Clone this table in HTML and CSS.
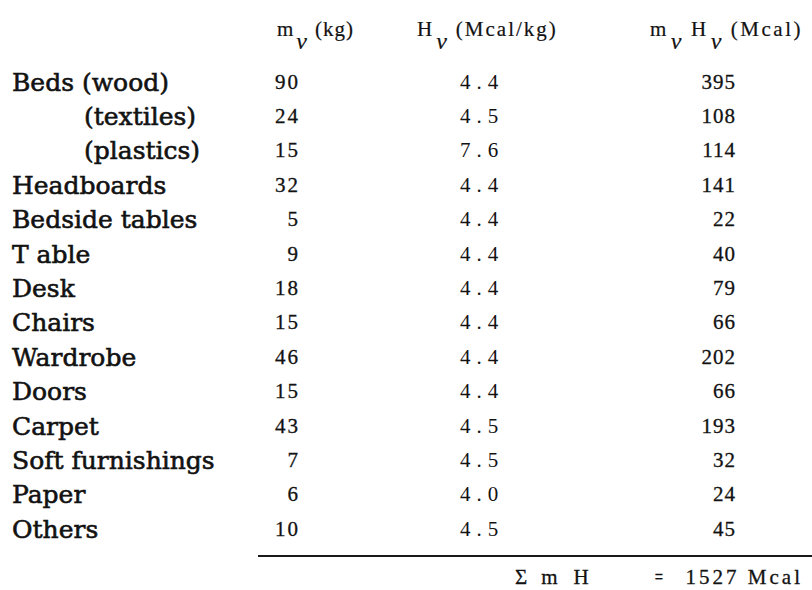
FILE: index.html
```html
<!DOCTYPE html>
<html>
<head>
<meta charset="utf-8">
<link rel="stylesheet" href="styles.css">
</head>
<body>
<div class="sheet">
  <div class="hd hd-label"></div>
  <div class="hd hd-m">m<sub class="nu">ν</sub>(kg)</div>
  <div class="hd hd-h">H<sub class="nu">ν</sub>(Mcal/kg)</div>
  <div class="hd hd-mh">m<sub class="nu">ν</sub>H<sub class="nu">ν</sub>(Mcal)</div>
  <div class="hd"></div>

  <div class="lab">Beds (wood)</div><div class="n">90</div><div class="h">4.4</div><div class="t">395</div><div></div>
  <div class="lab ind">(textiles)</div><div class="n">24</div><div class="h">4.5</div><div class="t">108</div><div></div>
  <div class="lab ind">(plastics)</div><div class="n">15</div><div class="h">7.6</div><div class="t">114</div><div></div>
  <div class="lab">Headboards</div><div class="n">32</div><div class="h">4.4</div><div class="t">141</div><div></div>
  <div class="lab">Bedside tables</div><div class="n">5</div><div class="h">4.4</div><div class="t">22</div><div></div>
  <div class="lab">T able</div><div class="n">9</div><div class="h">4.4</div><div class="t">40</div><div></div>
  <div class="lab">Desk</div><div class="n">18</div><div class="h">4.4</div><div class="t">79</div><div></div>
  <div class="lab">Chairs</div><div class="n">15</div><div class="h">4.4</div><div class="t">66</div><div></div>
  <div class="lab">Wardrobe</div><div class="n">46</div><div class="h">4.4</div><div class="t">202</div><div></div>
  <div class="lab">Doors</div><div class="n">15</div><div class="h">4.4</div><div class="t">66</div><div></div>
  <div class="lab">Carpet</div><div class="n">43</div><div class="h">4.5</div><div class="t">193</div><div></div>
  <div class="lab">Soft furnishings</div><div class="n">7</div><div class="h">4.5</div><div class="t">32</div><div></div>
  <div class="lab">Paper</div><div class="n">6</div><div class="h">4.0</div><div class="t">24</div><div></div>
  <div class="lab">Others</div><div class="n">10</div><div class="h">4.5</div><div class="t">45</div><div></div>

  <div class="rule"></div>
  <div class="sum">
    <span class="sigma">Σ</span>
    <span class="sum-m">m<sub class="nu2">ν</sub></span>
    <span class="sum-h">H<sub class="nu2">ν</sub></span>
    <span class="eq">=</span>
    <span class="sum-val">1527 Mcal</span>
  </div>
</div>
</body>
</html>
```

FILE: styles.css
```css
html, body {
  margin: 0;
  padding: 0;
  background: #ffffff;
  overflow: hidden;
}

.sheet {
  display: grid;
  grid-template-columns: 243px 43px 180px 257px 77px;
  grid-template-rows: 65px repeat(14, 34.4px) 11px 30px;
  align-items: center;
  padding-left: 12px;
  color: #121212;
  font-family: "Liberation Serif", "Times New Roman", serif;
}

.hd {
  align-self: start;
  padding-top: 18px;
  font-size: 21px;
  line-height: 22px;
  letter-spacing: 1px;
  white-space: nowrap;
  -webkit-text-stroke: 0.2px #121212;
}

.hd-m {
  padding-left: 22px;
}

.hd-h {
  padding-left: 119px;
  letter-spacing: 2px;
}

.hd-mh {
  padding-left: 172px;
  letter-spacing: 2.5px;
}

.nu {
  font-style: italic;
  font-size: 24px;
  vertical-align: -13px;
  line-height: 0;
  margin: 0 7px 0 2px;
}

.lab {
  font-family: "DejaVu Serif", serif;
  font-size: 25px;
  -webkit-text-stroke: 0.6px #121212;
  white-space: nowrap;
}

.lab.ind {
  padding-left: 72px;
}

.n {
  font-size: 21px;
  text-align: right;
  letter-spacing: 2px;
  margin-right: -2px;
  -webkit-text-stroke: 0.3px #121212;
}

.h {
  font-size: 21px;
  padding-left: 162px;
  letter-spacing: 6px;
}

.t {
  font-size: 21px;
  text-align: right;
  letter-spacing: 1px;
  margin-right: -1px;
  -webkit-text-stroke: 0.3px #121212;
}

.rule {
  grid-column: 2 / 6;
  align-self: end;
  margin-left: 3px;
  height: 2px;
  background: #1a1a1a;
}

.sum {
  grid-column: 2 / 6;
  align-self: start;
  display: flex;
  align-items: baseline;
  padding-top: 9px;
  margin-left: 260px;
  font-size: 21px;
  line-height: 22px;
  white-space: nowrap;
  -webkit-text-stroke: 0.3px #121212;
}

.sum-m {
  margin-left: 14px;
}

.sum-h {
  margin-left: 2px;
}

.nu2 {
  font-style: italic;
  font-size: 20px;
  vertical-align: -16px;
  line-height: 0;
  margin: 0 4px 0 1px;
}

.eq {
  margin-left: 50px;
  transform: scaleX(0.7);
}

.sum-val {
  margin-left: auto;
  padding-right: 9px;
  letter-spacing: 3px;
}
```
